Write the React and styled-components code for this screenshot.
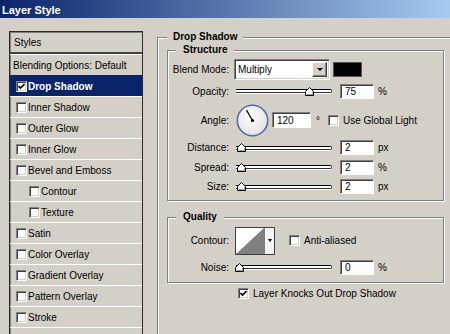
import React from "react";
import styled, { createGlobalStyle } from "styled-components";

const NAVY = "#0a246a";
const FACE = "#d4d0c8";

const GlobalStyle = createGlobalStyle`
  html, body {
    margin: 0;
    padding: 0;
    background: ${FACE};
    overflow: hidden;
  }
  body {
    font-family: "Liberation Sans", Arial, sans-serif;
    font-size: 10px;
    color: #000;
  }
`;

const Dialog = styled.div`
  width: 450px;
  height: 334px;
  overflow: hidden;
  background: ${FACE};
  display: flex;
  flex-direction: column;
`;

const TitleBar = styled.div`
  flex: none;
  height: 18px;
  box-sizing: border-box;
  padding: 1px 0 0 2px;
  display: flex;
  align-items: center;
  background: linear-gradient(to right, #0a246a, #a6caf0);
  color: #fff;
  font-weight: bold;
  font-size: 11px;
`;

const Body = styled.div`
  display: flex;
  align-items: flex-start;
  padding: 13px 0 0 9px;
`;

/* ---- left list of effects ---- */

const StyleList = styled.div`
  flex: none;
  width: 134px;
  height: 320px;
  box-sizing: border-box;
  border: 1px solid #2a2a2a;
  box-shadow: inset 1px 1px 0 #808080;
`;

const ListHeader = styled.div`
  height: 22px;
  box-sizing: border-box;
  padding-left: 4px;
  display: flex;
  align-items: center;
  border-bottom: 2px solid #404040;
`;

const Item = styled.div`
  height: 21px;
  box-sizing: border-box;
  display: flex;
  align-items: center;
  gap: 1px;
  padding-left: ${p => p.$indent}px;
  border-top: 1px solid ${p => (p.$selected ? NAVY : "#fff")};
  background: ${p => (p.$selected ? NAVY : "transparent")};
  color: ${p => (p.$selected ? "#fff" : "#000")};
  font-weight: ${p => (p.$selected ? "bold" : "normal")};
  white-space: nowrap;
`;

/* ---- checkbox ---- */

const Box = styled.span`
  flex: none;
  width: 11px;
  height: 11px;
  box-sizing: border-box;
  margin-left: ${p => p.$ml || 0}px;
  border: 1px solid;
  border-color: #808080 #fff #fff #808080;
  box-shadow: inset 1px 1px 0 #404040, inset -1px -1px 0 ${FACE};
  background: #fff;
  display: flex;
  align-items: center;
  justify-content: center;
`;

const Check = ({ checked, ml }) => (
  <Box $ml={ml}>
    {checked && (
      <svg width="7" height="7" viewBox="0 0 7 7">
        <path d="M0.5 3 L2.5 5 L6.5 1" fill="none" stroke="#000" strokeWidth="1.6" />
      </svg>
    )}
  </Box>
);

/* ---- group boxes ---- */

const Group = styled.fieldset`
  margin: 0;
  min-width: 0;
  box-sizing: border-box;
  border: 1px solid #808080;
  box-shadow: inset 1px 1px 0 #fff, 1px 1px 0 #fff;
`;

const OuterGroup = styled(Group)`
  flex: none;
  margin-left: 14px;
  width: 310px;
  min-height: 330px;
  padding: 1px 0 0 9px;
`;

const InnerGroup = styled(Group)`
  width: 277px;
  padding: 3px 0 ${p => p.$pb}px 0;
  margin-top: ${p => p.$mt || 0}px;
`;

const Legend = styled.legend`
  font-weight: bold;
  line-height: 12px;
  padding: 0 ${p => p.$pad}px;
  margin-left: ${p => p.$ml || 0}px;
  background: ${FACE};
`;

const Row = styled.div`
  display: grid;
  grid-template-columns: 61px auto;
  column-gap: 5px;
  align-items: center;
  height: ${p => p.$h}px;
`;

const Label = styled.span`
  text-align: right;
  white-space: nowrap;
`;

const Controls = styled.div`
  display: flex;
  align-items: center;
  white-space: nowrap;
`;

/* ---- controls ---- */

const SelectBox = styled.div`
  flex: none;
  width: 96px;
  height: 21px;
  box-sizing: border-box;
  padding: 1px;
  display: flex;
  border: 1px solid;
  border-color: #808080 #fff #fff #808080;
  box-shadow: inset 1px 1px 0 #404040, inset -1px -1px 0 ${FACE};
  background: #fff;
`;

const SelectText = styled.span`
  flex: 1;
  display: flex;
  align-items: center;
  padding-left: 2px;
`;

const DropButton = styled.span`
  flex: none;
  width: 15px;
  box-sizing: border-box;
  margin: 1px 1px 1px 0;
  background: ${FACE};
  border: 1px solid;
  border-color: #fff #404040 #404040 #fff;
  box-shadow: inset -1px -1px 0 #808080;
  display: flex;
  align-items: center;
  justify-content: center;

  &::after {
    content: "";
    border-left: 3px solid transparent;
    border-right: 3px solid transparent;
    border-top: 3px solid #000;
  }
`;

const Swatch = styled.span`
  flex: none;
  width: 29px;
  height: 15px;
  box-sizing: border-box;
  margin-left: 3px;
  background: #000;
  border: 1px solid #555;
`;

const SliderWrap = styled.div`
  position: relative;
  flex: none;
  width: 96px;
  height: 11px;
  margin-left: 2px;
  display: flex;
  align-items: center;
`;

const Track = styled.div`
  width: 100%;
  height: 2px;
  background: #fff;
  border-top: 1px solid #000;
  border-bottom: 1px solid #303030;
  border-right: 1px solid #303030;
  border-radius: 0 2px 2px 0;
  box-shadow: 0 1px 0 #fff;
`;

const ThumbSvg = styled.svg`
  position: absolute;
  top: 1px;
`;

const Slider = ({ value }) => (
  <SliderWrap>
    <Track />
    <ThumbSvg width="9" height="9" viewBox="0 0 9 9" style={{ left: -1 + value * 0.93 }}>
      <polygon points="4.5,0.5 8.5,4.5 8.5,8.5 0.5,8.5 0.5,4.5" fill="#fff" stroke="#000" strokeWidth="1" />
      <path d="M7.5 5 V7.5 H1.5" fill="none" stroke="#a0a0a0" strokeWidth="1" />
    </ThumbSvg>
  </SliderWrap>
);

const ValueBox = styled.div`
  flex: none;
  width: ${p => p.$w || 34}px;
  height: ${p => p.$hgt || 15}px;
  box-sizing: border-box;
  margin-left: ${p => p.$ml}px;
  padding-left: 4px;
  display: flex;
  align-items: center;
  border: 1px solid;
  border-color: #808080 #fff #fff #808080;
  box-shadow: inset 1px 1px 0 #404040;
  background: #fff;
`;

const Unit = styled.span`
  margin-left: ${p => p.$ml || 4}px;
`;

const Dial = () => (
  <svg width="33" height="33" viewBox="0 0 33 33" style={{ marginLeft: 2, flex: "none" }}>
    <defs>
      <radialGradient id="dialFill" cx="0.45" cy="0.4" r="0.6">
        <stop offset="0" stopColor="#ffffff" />
        <stop offset="1" stopColor="#e2e2e6" />
      </radialGradient>
    </defs>
    <circle cx="16.5" cy="16.5" r="15.2" fill="url(#dialFill)" stroke="#4d6ea6" strokeWidth="1.6" />
    <line x1="16.5" y1="16.5" x2="10.5" y2="6.1" stroke="#000" strokeWidth="1.2" />
    <circle cx="16.5" cy="16.5" r="1.6" fill="#000" />
  </svg>
);

const ContourPicker = styled.div`
  flex: none;
  display: flex;
  margin-left: 1px;
  height: 28px;
  box-sizing: border-box;
  border: 1px solid #404040;
  background: #fff;
`;

const ContourArrow = styled.span`
  width: 9px;
  border-left: 1px solid #808080;
  display: flex;
  align-items: center;
  justify-content: center;
  background: #f4f4f4;

  &::after {
    content: "";
    border-left: 2.5px solid transparent;
    border-right: 2.5px solid transparent;
    border-top: 3px solid #000;
  }
`;

const KnockRow = styled.div`
  height: 20px;
  display: flex;
  align-items: center;
  gap: 4px;
  padding-left: 71px;
`;

const effects = [
  { name: "Inner Shadow", indent: 6 },
  { name: "Outer Glow", indent: 6 },
  { name: "Inner Glow", indent: 6 },
  { name: "Bevel and Emboss", indent: 6 },
  { name: "Contour", indent: 19 },
  { name: "Texture", indent: 19 },
  { name: "Satin", indent: 6 },
  { name: "Color Overlay", indent: 6 },
  { name: "Gradient Overlay", indent: 6 },
  { name: "Pattern Overlay", indent: 6 },
  { name: "Stroke", indent: 6 },
];

const SliderRow = ({ label, value, unit, h }) => (
  <Row $h={h}>
    <Label>{label}</Label>
    <Controls>
      <Slider value={value} />
      <ValueBox $ml={8}>{value}</ValueBox>
      <Unit>{unit}</Unit>
    </Controls>
  </Row>
);

export default function App() {
  return (
    <Dialog>
      <GlobalStyle />
      <TitleBar>Layer Style</TitleBar>
      <Body>
        <StyleList>
          <ListHeader>Styles</ListHeader>
          <Item $indent={3}>Blending Options: Default</Item>
          <Item $indent={6} $selected>
            <Check checked />
            <span>Drop Shadow</span>
          </Item>
          {effects.map(e => (
            <Item key={e.name} $indent={e.indent}>
              <Check />
              <span>{e.name}</span>
            </Item>
          ))}
          <Item $indent={6} />
        </StyleList>

        <OuterGroup>
          <Legend $pad={6}>Drop Shadow</Legend>

          <InnerGroup $pb={4}>
            <Legend $pad={7} $ml={8}>Structure</Legend>
            <Row $h={21}>
              <Label>Blend Mode:</Label>
              <Controls>
                <SelectBox>
                  <SelectText>Multiply</SelectText>
                  <DropButton />
                </SelectBox>
                <Swatch />
              </Controls>
            </Row>
            <SliderRow h={22} label="Opacity:" value={75} unit="%" />
            <Row $h={36}>
              <Label>Angle:</Label>
              <Controls>
                <Dial />
                <ValueBox $ml={3} $w={39} $hgt={16}>120</ValueBox>
                <Unit $ml={5}>°</Unit>
                <Check ml={8} />
                <Unit>Use Global Light</Unit>
              </Controls>
            </Row>
            <SliderRow h={19} label="Distance:" value={2} unit="px" />
            <SliderRow h={20} label="Spread:" value={2} unit="%" />
            <SliderRow h={19} label="Size:" value={2} unit="px" />
          </InnerGroup>

          <InnerGroup $pb={3} $mt={10}>
            <Legend $pad={7} $ml={8}>Quality</Legend>
            <Row $h={29}>
              <Label>Contour:</Label>
              <Controls>
                <ContourPicker>
                  <svg width="28" height="26" viewBox="0 0 28 26">
                    <polygon points="0,26 28,0 28,26" fill="#808080" />
                  </svg>
                  <ContourArrow />
                </ContourPicker>
                <Check ml={14} />
                <Unit>Anti-aliased</Unit>
              </Controls>
            </Row>
            <SliderRow h={24} label="Noise:" value={0} unit="%" />
          </InnerGroup>

          <KnockRow>
            <Check checked />
            <span>Layer Knocks Out Drop Shadow</span>
          </KnockRow>
        </OuterGroup>
      </Body>
    </Dialog>
  );
}
